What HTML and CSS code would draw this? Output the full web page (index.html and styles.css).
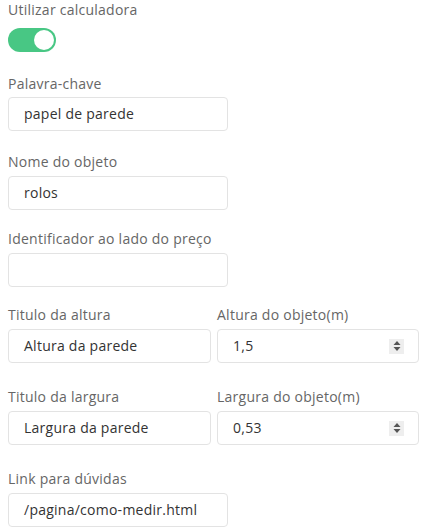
FILE: index.html
```html
<!DOCTYPE html>
<html lang="pt">
<head>
<meta charset="utf-8">
<link rel="stylesheet" href="styles.css">
</head>
<body>
<div class="form">
  <div class="group g-toggle">
    <div class="label">Utilizar calculadora</div>
    <div class="toggle"><span class="knob"></span></div>
  </div>
  <div class="group g1">
    <div class="label">Palavra-chave</div>
    <div class="field single">papel de parede</div>
  </div>
  <div class="group g2">
    <div class="label">Nome do objeto</div>
    <div class="field single">rolos</div>
  </div>
  <div class="group g3">
    <div class="label">Identificador ao lado do preço</div>
    <div class="field single"></div>
  </div>
  <div class="row g4">
    <div class="col">
      <div class="label">Titulo da altura</div>
      <div class="field">Altura da parede</div>
    </div>
    <div class="col">
      <div class="label">Altura do objeto(m)</div>
      <div class="field number"><span>1,5</span><span class="spin"><svg width="8" height="12" viewBox="0 0 8 12"><path d="M4 1 L7.5 5 L0.5 5 Z M4 11 L7.5 7 L0.5 7 Z" fill="#555"/></svg></span></div>
    </div>
  </div>
  <div class="row g5">
    <div class="col">
      <div class="label">Titulo da largura</div>
      <div class="field">Largura da parede</div>
    </div>
    <div class="col">
      <div class="label">Largura do objeto(m)</div>
      <div class="field number"><span>0,53</span><span class="spin"><svg width="8" height="12" viewBox="0 0 8 12"><path d="M4 1 L7.5 5 L0.5 5 Z M4 11 L7.5 7 L0.5 7 Z" fill="#555"/></svg></span></div>
    </div>
  </div>
  <div class="group g6">
    <div class="label">Link para dúvidas</div>
    <div class="field single">/pagina/como-medir.html</div>
  </div>
</div>
</body>
</html>
```

FILE: styles.css
```css
html, body {
  margin: 0;
  padding: 0;
  background: #ffffff;
}
body {
  font-family: "Open Sans", "Noto Sans", sans-serif;
  font-size: 14px;
  line-height: 20px;
  letter-spacing: 0.25px;
}
.form {
  padding-left: 8px;
}
.label {
  color: #666666;
  height: 20px;
  margin-bottom: 4px;
  white-space: nowrap;
}
.g-toggle .label {
  margin-bottom: 8px;
}
.toggle {
  width: 48px;
  height: 24px;
  border-radius: 12px;
  background: #48c784;
  display: flex;
  align-items: center;
  justify-content: flex-end;
  padding-right: 2px;
  box-sizing: border-box;
}
.knob {
  width: 20px;
  height: 20px;
  border-radius: 50%;
  background: #ffffff;
}
.g1 { margin-top: 22px; }
.g1 .label { margin-bottom: 3px; }
.g2 { margin-top: 21px; }
.g3 { margin-top: 19px; }
.g4 { margin-top: 18px; }
.g5 { margin-top: 24px; }
.g6 { margin-top: 24px; }
.field {
  box-sizing: border-box;
  height: 34px;
  border: 1px solid #e3e3e3;
  border-radius: 4px;
  padding: 0 15px;
  color: #333333;
  display: flex;
  align-items: center;
  white-space: nowrap;
}
.single {
  width: 220px;
}
.row {
  display: grid;
  grid-template-columns: 203px 202px;
  column-gap: 6px;
}
.number {
  justify-content: space-between;
  padding-right: 14px;
}
.spin {
  width: 15px;
  height: 15px;
  background: #eeeeee;
  display: flex;
  align-items: center;
  justify-content: center;
}
```
